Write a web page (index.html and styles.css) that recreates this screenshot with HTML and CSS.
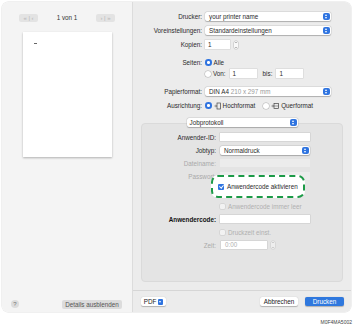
FILE: index.html
```html
<!DOCTYPE html>
<html lang="de">
<head>
    <meta charset="UTF-8">
    <meta name="viewport" content="width=device-width, initial-scale=1.0">
    <title>Drucken</title>
    <link rel="stylesheet" href="styles.css">
</head>
<body>
    <div class="window">
        <aside class="preview-pane">
            <div class="pager">
                <span class="pager-btn">«&nbsp;|&nbsp;‹</span>
                <span class="pager-count">1 von 1</span>
                <span class="pager-btn">›&nbsp;|&nbsp;»</span>
            </div>
            <div class="sheet"><span class="sheet-mark"></span></div>
            <div class="pane-footer">
                <span class="help">?</span>
                <span class="btn btn-gray">Details ausblenden</span>
            </div>
        </aside>

        <main class="settings-pane">
            <div class="settings">
                <div class="row">
                    <span class="label">Drucker:</span>
                    <div class="select wide"><span>your printer name</span><i class="updown"></i></div>
                </div>
                <div class="row">
                    <span class="label">Voreinstellungen:</span>
                    <div class="select wide"><span>Standardeinstellungen</span><i class="updown"></i></div>
                </div>
                <div class="row">
                    <span class="label">Kopien:</span>
                    <div class="field copies">1</div>
                    <i class="stepper"></i>
                </div>
                <div class="row spaced">
                    <span class="label">Seiten:</span>
                    <span class="radio on"></span>
                    <span class="text">Alle</span>
                </div>
                <div class="row tight">
                    <span class="label"></span>
                    <span class="radio"></span>
                    <span class="text">Von:</span>
                    <div class="field range">1</div>
                    <span class="text">bis:</span>
                    <div class="field range">1</div>
                </div>
                <div class="row spaced">
                    <span class="label">Papierformat:</span>
                    <div class="select wide"><span>DIN A4 <em>210 x 297 mm</em></span><i class="updown"></i></div>
                </div>
                <div class="row">
                    <span class="label">Ausrichtung:</span>
                    <span class="radio on"></span>
                    <svg class="orient" width="7" height="8" viewBox="0 0 7 8"><path d="M0.5 4h2M1.6 3.2l0.9 0.8-0.9 0.8" stroke="#555" stroke-width="0.7" fill="none"/><rect x="3" y="1" width="3.5" height="6" fill="none" stroke="#444" stroke-width="0.7"/></svg>
                    <span class="text">Hochformat</span>
                    <span class="radio gap"></span>
                    <svg class="orient" width="8" height="8" viewBox="0 0 8 8"><path d="M0.5 4h2M1.6 3.2l0.9 0.8-0.9 0.8" stroke="#555" stroke-width="0.7" fill="none"/><rect x="3" y="1.5" width="4.5" height="5" fill="none" stroke="#444" stroke-width="0.7"/><path d="M3 4h4.5" stroke="#444" stroke-width="0.5"/></svg>
                    <span class="text">Querformat</span>
                </div>

                <div class="section-popup">
                    <div class="select popup"><span>Jobprotokoll</span><i class="updown"></i></div>
                </div>

                <div class="group">
                    <div class="grow">
                        <span class="glabel">Anwender-ID:</span>
                        <div class="field gfield"></div>
                    </div>
                    <div class="grow">
                        <span class="glabel">Jobtyp:</span>
                        <div class="select gfield"><span>Normaldruck</span><i class="updown"></i></div>
                    </div>
                    <div class="grow">
                        <span class="glabel off">Dateiname:</span>
                        <div class="field gfield disabled"></div>
                    </div>
                    <div class="grow">
                        <span class="glabel off">Passwort:</span>
                        <div class="field gfield disabled"></div>
                    </div>
                    <div class="highlight">
                        <span class="check on"></span>
                        <span class="text">Anwendercode aktivieren</span>
                    </div>
                    <div class="grow">
                        <span class="glabel"></span>
                        <span class="check"></span>
                        <span class="text off">Anwendercode immer leer</span>
                    </div>
                    <div class="grow">
                        <span class="glabel strong">Anwendercode:</span>
                        <div class="field gfield"></div>
                    </div>
                    <div class="grow">
                        <span class="glabel"></span>
                        <span class="check"></span>
                        <span class="text off">Druckzeit einst.</span>
                    </div>
                    <div class="grow">
                        <span class="glabel off">Zeit:</span>
                        <div class="field time">0:00</div>
                        <i class="stepper faint"></i>
                    </div>
                </div>
            </div>

            <footer class="dialog-footer">
                <span class="btn btn-white pdf">PDF <i class="chev"></i></span>
                <span class="btn btn-white cancel">Abbrechen</span>
                <span class="btn btn-blue">Drucken</span>
            </footer>
        </main>
    </div>
    <div class="figure-id">M0F4MA5002</div>
</body>
</html>
```

FILE: styles.css
```css
body {
    margin: 0;
    background-color: #ffffff;
    font-family: "Liberation Sans", Arial, sans-serif;
    font-size: 6.3px;
    color: #2b2b2b;
}
.window {
    margin: 2px 2px 0 2px;
    width: 349px;
    height: 310px;
    display: flex;
    border-radius: 6px;
    overflow: hidden;
    box-shadow: 0 0 0 0.5px rgba(0, 0, 0, 0.12);
}

/* left pane */
.preview-pane {
    width: 130px;
    background-color: #f4f4f4;
    border-right: 1px solid #dcdcdc;
    display: flex;
    flex-direction: column;
}
.pager {
    display: flex;
    justify-content: space-between;
    align-items: center;
    padding: 11px 17px 0 17px;
    height: 9px;
}
.pager-btn {
    width: 19px;
    height: 8px;
    line-height: 8px;
    background-color: #e3e3e3;
    border-radius: 2px;
    color: #b5b5b5;
    font-size: 6px;
    text-align: center;
}
.pager-count {
    font-size: 6.3px;
    color: #333;
}
.sheet {
    margin: 10px 0 0 21px;
    width: 89px;
    height: 125px;
    background-color: #ffffff;
    box-shadow: 0 1px 2px rgba(0, 0, 0, 0.28);
}
.sheet-mark {
    display: block;
    width: 3px;
    height: 1px;
    margin: 11px 0 0 11px;
    background-color: #666;
}
.pane-footer {
    margin-top: auto;
    display: flex;
    justify-content: space-between;
    align-items: center;
    padding: 0 10px 3px 9px;
    height: 10px;
}
.help {
    width: 8px;
    height: 8px;
    line-height: 8px;
    border-radius: 50%;
    background-color: #dcdcdc;
    color: #777;
    font-size: 6px;
    text-align: center;
}

/* buttons */
.btn {
    height: 9px;
    line-height: 9px;
    border-radius: 2px;
    text-align: center;
    font-size: 6.3px;
}
.btn-gray {
    width: 60px;
    background-color: #dcdcdc;
    color: #555;
}
.btn-white {
    background-color: #ffffff;
    box-shadow: 0 0.5px 1px rgba(0, 0, 0, 0.25);
    color: #222;
}
.btn-blue {
    width: 39px;
    background-color: #2f78de;
    color: #ffffff;
    box-shadow: 0 0.5px 1px rgba(0, 0, 0, 0.25);
}

/* right pane */
.settings-pane {
    flex: 1;
    display: flex;
    flex-direction: column;
    background-color: #ececec;
}
.settings {
    flex: 1;
    padding-top: 10px;
}
.row {
    display: flex;
    align-items: center;
    height: 9px;
    margin-top: 5px;
}
.row:first-child {
    margin-top: 0;
}
.row.spaced {
    margin-top: 9px;
}
.row.tight {
    margin-top: 2px;
}
.label {
    width: 69px;
    margin-right: 3px;
    text-align: right;
    flex-shrink: 0;
}
.text {
    margin-left: 2px;
    white-space: nowrap;
}
.text.off {
    color: #b0b0b0;
}
.select {
    height: 9px;
    background-color: #ffffff;
    border-radius: 2px;
    box-shadow: 0 0 0 0.5px rgba(0, 0, 0, 0.1), 0 0.5px 1px rgba(0, 0, 0, 0.22);
    display: flex;
    align-items: center;
    justify-content: space-between;
    padding-left: 4px;
    box-sizing: border-box;
}
.select.wide {
    width: 126px;
}
.select em {
    font-style: normal;
    color: #9a9a9a;
}
.updown {
    width: 7px;
    height: 7px;
    margin-right: 1px;
    border-radius: 2px;
    background-color: #2f74e0;
    position: relative;
}
.updown::before,
.updown::after {
    content: "";
    position: absolute;
    left: 2px;
    width: 0;
    height: 0;
    border-left: 1.5px solid transparent;
    border-right: 1.5px solid transparent;
}
.updown::before {
    top: 1px;
    border-bottom: 2px solid #ffffff;
}
.updown::after {
    bottom: 1px;
    border-top: 2px solid #ffffff;
}
.field {
    height: 9px;
    line-height: 9px;
    background-color: #ffffff;
    padding-left: 3px;
    box-sizing: border-box;
    box-shadow: 0 0 0 0.5px rgba(0, 0, 0, 0.12);
}
.field.copies {
    width: 25px;
}
.field.range {
    width: 27px;
    margin: 0 4px;
}
.stepper {
    width: 4px;
    height: 8px;
    margin-left: 4px;
    border-radius: 2px;
    box-shadow: 0 0 0 0.5px rgba(0, 0, 0, 0.2);
    background-color: #f8f8f8;
    position: relative;
}
.stepper::before,
.stepper::after {
    content: "";
    position: absolute;
    left: 0.5px;
    border-left: 1.5px solid transparent;
    border-right: 1.5px solid transparent;
}
.stepper::before {
    top: 1px;
    border-bottom: 1.5px solid #777;
}
.stepper::after {
    bottom: 1px;
    border-top: 1.5px solid #777;
}
.stepper.faint {
    opacity: 0.5;
}
.radio {
    width: 6px;
    height: 6px;
    border-radius: 50%;
    background-color: #ffffff;
    box-shadow: 0 0 0 0.5px rgba(0, 0, 0, 0.25);
    flex-shrink: 0;
}
.radio.on {
    width: 2.6px;
    height: 2.6px;
    border: 2px solid #2f74e0;
    box-shadow: none;
}
.radio.gap {
    margin-left: 8px;
}
.orient {
    margin-left: 2px;
}

/* Jobprotokoll group */
.section-popup {
    display: flex;
    justify-content: center;
    margin-top: 8px;
    position: relative;
    z-index: 1;
}
.select.popup {
    width: 111px;
    padding-left: 3px;
}
.group {
    margin: -4px 8px 0 8px;
    height: 159px;
    background-color: #e4e4e4;
    border: 0.5px solid #dadada;
    border-radius: 4px;
    box-sizing: border-box;
    padding-top: 9px;
}
.grow {
    display: flex;
    align-items: center;
    height: 8px;
    margin-bottom: 5px;
}
.glabel {
    width: 74px;
    margin-right: 4px;
    text-align: right;
    flex-shrink: 0;
}
.glabel.off {
    color: #a9a9a9;
}
.glabel.strong {
    font-weight: bold;
    color: #111;
}
.gfield {
    width: 90px;
    height: 8px;
}
.select.gfield {
    height: 9px;
}
.field.disabled {
    background-color: #ececec;
    box-shadow: none;
}
.field.time {
    width: 46px;
    height: 8px;
    line-height: 8px;
    margin-left: 1px;
    color: #b0b0b0;
    padding-left: 4px;
}
.check {
    width: 5px;
    height: 5px;
    border-radius: 1px;
    background-color: #f2f2f2;
    box-shadow: 0 0 0 0.5px rgba(0, 0, 0, 0.12);
    flex-shrink: 0;
    margin-right: 1px;
}
.check.on {
    width: 6px;
    height: 6px;
    background-color: #2f74e0;
    box-shadow: none;
    position: relative;
}
.check.on::after {
    content: "";
    position: absolute;
    left: 1.6px;
    top: 0.6px;
    width: 1.5px;
    height: 3px;
    border: solid #ffffff;
    border-width: 0 1px 1px 0;
    transform: rotate(40deg);
}
.highlight {
    position: relative;
    z-index: 1;
    margin: -10px 0 4px 69px;
    width: 94px;
    height: 23px;
    box-sizing: border-box;
    border: 2.5px dashed #1c9a47;
    border-radius: 7px;
    background-color: #ffffff;
    display: flex;
    align-items: center;
    padding-left: 5px;
}

/* footer */
.dialog-footer {
    height: 21px;
    border-top: 1px solid #d6d6d6;
    display: flex;
    align-items: center;
    padding: 0 7px 0 8px;
}
.pdf {
    width: 25px;
    display: flex;
    align-items: center;
    justify-content: center;
    gap: 2px;
}
.chev {
    width: 5px;
    height: 6px;
    border-radius: 1px;
    background-color: #2f74e0;
    position: relative;
}
.chev::after {
    content: "";
    position: absolute;
    left: 1px;
    top: 2px;
    border-left: 1.5px solid transparent;
    border-right: 1.5px solid transparent;
    border-top: 2px solid #ffffff;
}
.cancel {
    width: 38px;
    margin-left: auto;
    margin-right: 7px;
}
.figure-id {
    width: 352px;
    text-align: right;
    margin-top: 7px;
    font-size: 5px;
    color: #444;
}
```
